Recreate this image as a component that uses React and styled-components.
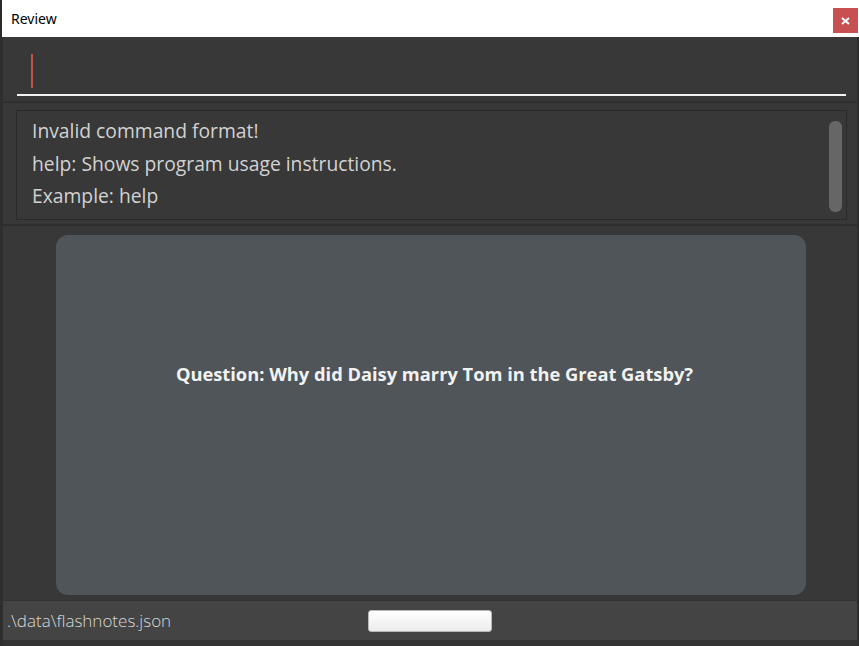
import React from "react"
import styled, { createGlobalStyle } from "styled-components"

const GlobalStyle = createGlobalStyle`
    html, body {
        margin: 0;
        padding: 0;
        background: #383838;
    }
    #root {
        width: 859px;
        height: 646px;
    }
`

const Window = styled.div`
    width: 859px;
    height: 646px;
    display: flex;
    flex-direction: column;
    background: #383838;
    overflow: hidden;
`

const TitleBar = styled.div`
    height: 37px;
    flex: none;
    background: #ffffff;
    display: flex;
    align-items: center;
    justify-content: space-between;
    padding: 0 1px 0 9px;
    border-left: 2px solid #2a2a2a;
    box-sizing: border-box;
    font-family: "Noto Sans", "Liberation Sans", sans-serif;
    font-size: 14px;
    color: #000;
`

const CloseButton = styled.div`
    width: 25px;
    height: 25px;
    background: #c75050;
    color: #fff;
    display: flex;
    align-items: center;
    justify-content: center;
    margin-top: 4px;
`

const Body = styled.div`
    flex: 1;
    display: flex;
    flex-direction: column;
    border-left: 3px solid #2e2e2e;
    border-right: 2px solid #2e2e2e;
`

const CommandPane = styled.div`
    height: 64px;
    flex: none;
    padding: 0 11px 0 14px;
    border-bottom: 2px solid #2e2e2e;
    display: flex;
    flex-direction: column;
`

const CommandInput = styled.div`
    margin-top: 17px;
    height: 40px;
    border-bottom: 2px solid #f2f2f2;
    display: flex;
    align-items: flex-start;
    padding-left: 14px;
`

const Caret = styled.div`
    width: 2px;
    height: 34px;
    background: #c25440;
`

const ResultPane = styled.div`
    height: 123px;
    flex: none;
    padding: 7px 10px 0 13px;
    box-sizing: border-box;
    border-bottom: 2px solid #2e2e2e;
`

const ResultBox = styled.div`
    height: 110px;
    box-sizing: border-box;
    border: 1px solid #2a2a2a;
    display: flex;
    justify-content: space-between;
    padding: 4px 4px 0 15px;
`

const ResultText = styled.div`
    font-family: "Open Sans", "Noto Sans", sans-serif;
    font-weight: 400;
    font-size: 19.3px;
    line-height: 32.5px;
    color: #d2d2d2;
`

const ScrollThumb = styled.div`
    width: 13px;
    height: 91px;
    margin-top: 6px;
    border-radius: 6px;
    background: #666666;
`

const CardArea = styled.div`
    flex: 1;
    display: flex;
    padding: 9px 51px 5px 53px;
`

const Card = styled.div`
    flex: 1;
    border-radius: 12px;
    background: #4f5559;
    display: flex;
    align-items: center;
    justify-content: center;
    padding-bottom: 84px;
`

const Question = styled.div`
    font-family: "Open Sans", "Noto Sans", sans-serif;
    font-weight: 700;
    font-size: 18.3px;
    color: #f2f2f2;
    margin-left: 7px;
`

const StatusBar = styled.div`
    height: 39px;
    flex: none;
    background: #444444;
    border-top: 1px solid #333333;
    display: flex;
    align-items: center;
    padding-left: 4px;
`

const StatusText = styled.div`
    width: 361px;
    font-family: "Open Sans", "Noto Sans", sans-serif;
    font-weight: 300;
    font-size: 17px;
    color: #d9d9d9;
`

const StatusButton = styled.div`
    width: 124px;
    height: 22px;
    border-radius: 3px;
    background: linear-gradient(#ffffff, #ececec);
    border: 1px solid #b8b8b8;
    box-sizing: border-box;
`

const BottomStrip = styled.div`
    height: 6px;
    flex: none;
    background: #333333;
`

export default function App() {
    return (
        <Window>
            <GlobalStyle />
            <TitleBar>
                <span>Review</span>
                <CloseButton>
                    <svg width="9" height="8" viewBox="0 0 9 8">
                        <path d="M1 1 L8 7 M8 1 L1 7" stroke="#fff" strokeWidth="2" />
                    </svg>
                </CloseButton>
            </TitleBar>
            <Body>
                <CommandPane>
                    <CommandInput>
                        <Caret />
                    </CommandInput>
                </CommandPane>
                <ResultPane>
                    <ResultBox>
                        <ResultText>
                            Invalid command format!
                            <br />
                            help: Shows program usage instructions.
                            <br />
                            Example: help
                        </ResultText>
                        <ScrollThumb />
                    </ResultBox>
                </ResultPane>
                <CardArea>
                    <Card>
                        <Question>Question: Why did Daisy marry Tom in the Great Gatsby?</Question>
                    </Card>
                </CardArea>
                <StatusBar>
                    <StatusText>.\data\flashnotes.json</StatusText>
                    <StatusButton />
                </StatusBar>
                <BottomStrip />
            </Body>
        </Window>
    )
}
